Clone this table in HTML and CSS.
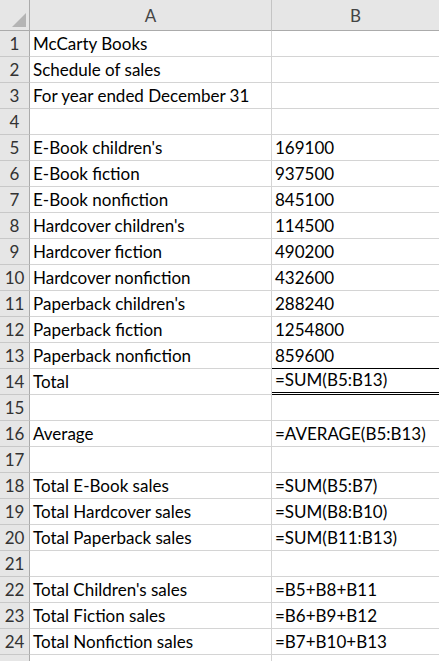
FILE: index.html
```html
<!DOCTYPE html>
<html>
<head>
<meta charset="utf-8">
<link rel="stylesheet" href="styles.css">
</head>
<body>
<div class="sheet">
  <div class="corner"><span class="tri"></span></div>
  <div class="colhead">A</div>
  <div class="colhead">B</div>

  <div class="rowhead">1</div><div class="cell">McCarty Books</div><div class="cell"></div>
  <div class="rowhead">2</div><div class="cell">Schedule of sales</div><div class="cell"></div>
  <div class="rowhead">3</div><div class="cell">For year ended December 31</div><div class="cell"></div>
  <div class="rowhead">4</div><div class="cell"></div><div class="cell"></div>
  <div class="rowhead">5</div><div class="cell">E-Book children's</div><div class="cell">169100</div>
  <div class="rowhead">6</div><div class="cell">E-Book fiction</div><div class="cell">937500</div>
  <div class="rowhead">7</div><div class="cell">E-Book nonfiction</div><div class="cell">845100</div>
  <div class="rowhead">8</div><div class="cell">Hardcover children's</div><div class="cell">114500</div>
  <div class="rowhead">9</div><div class="cell">Hardcover fiction</div><div class="cell">490200</div>
  <div class="rowhead">10</div><div class="cell">Hardcover nonfiction</div><div class="cell">432600</div>
  <div class="rowhead">11</div><div class="cell">Paperback children's</div><div class="cell">288240</div>
  <div class="rowhead">12</div><div class="cell">Paperback fiction</div><div class="cell">1254800</div>
  <div class="rowhead">13</div><div class="cell">Paperback nonfiction</div><div class="cell pre-total">859600</div>
  <div class="rowhead">14</div><div class="cell">Total</div><div class="cell total">=SUM(B5:B13)</div>
  <div class="rowhead">15</div><div class="cell"></div><div class="cell"></div>
  <div class="rowhead">16</div><div class="cell">Average</div><div class="cell">=AVERAGE(B5:B13)</div>
  <div class="rowhead">17</div><div class="cell"></div><div class="cell"></div>
  <div class="rowhead">18</div><div class="cell">Total E-Book sales</div><div class="cell">=SUM(B5:B7)</div>
  <div class="rowhead">19</div><div class="cell">Total Hardcover sales</div><div class="cell">=SUM(B8:B10)</div>
  <div class="rowhead">20</div><div class="cell">Total Paperback sales</div><div class="cell">=SUM(B11:B13)</div>
  <div class="rowhead">21</div><div class="cell"></div><div class="cell"></div>
  <div class="rowhead">22</div><div class="cell">Total Children's sales</div><div class="cell">=B5+B8+B11</div>
  <div class="rowhead">23</div><div class="cell">Total Fiction sales</div><div class="cell">=B6+B9+B12</div>
  <div class="rowhead">24</div><div class="cell">Total Nonfiction sales</div><div class="cell">=B7+B10+B13</div>
  <div class="rowhead"></div><div class="cell"></div><div class="cell"></div>
</div>
</body>
</html>
```

FILE: styles.css
```css
html, body {
  margin: 0;
  padding: 0;
  background: #ffffff;
  overflow: hidden;
}
.sheet {
  display: grid;
  grid-template-columns: 30px 242px 168px;
  grid-template-rows: 31px;
  grid-auto-rows: 26px;
  font-family: Lato, "Liberation Sans", sans-serif;
  font-size: 17px;
  color: #000;
}
.corner {
  background: #e6e6e6;
  border-right: 1px solid #ababab;
  border-bottom: 1px solid #ababab;
  box-sizing: border-box;
  position: relative;
}
.tri {
  position: absolute;
  right: 3px;
  bottom: 3px;
  width: 0;
  height: 0;
  border-left: 14px solid transparent;
  border-bottom: 14px solid #b4b4b4;
}
.colhead {
  background: #e6e6e6;
  border-right: 1px solid #c4c4c4;
  border-bottom: 1px solid #ababab;
  box-sizing: border-box;
  display: flex;
  align-items: flex-end;
  justify-content: center;
  padding-bottom: 4px;
  color: #444;
  font-size: 17px;
}
.rowhead {
  background: #e6e6e6;
  border-right: 1px solid #ababab;
  border-bottom: 1px solid #c8c8c8;
  box-sizing: border-box;
  display: flex;
  align-items: flex-end;
  justify-content: center;
  padding-bottom: 2px;
  color: #333;
}
.cell {
  border-right: 1px solid #d4d4d4;
  border-bottom: 1px solid #d4d4d4;
  box-sizing: border-box;
  display: flex;
  align-items: flex-end;
  padding: 0 0 2px 3px;
  white-space: nowrap;
  overflow: hidden;
}
.pre-total {
  border-bottom: 1px solid #000;
}
.total {
  border-bottom: 3px double #000;
}
```
